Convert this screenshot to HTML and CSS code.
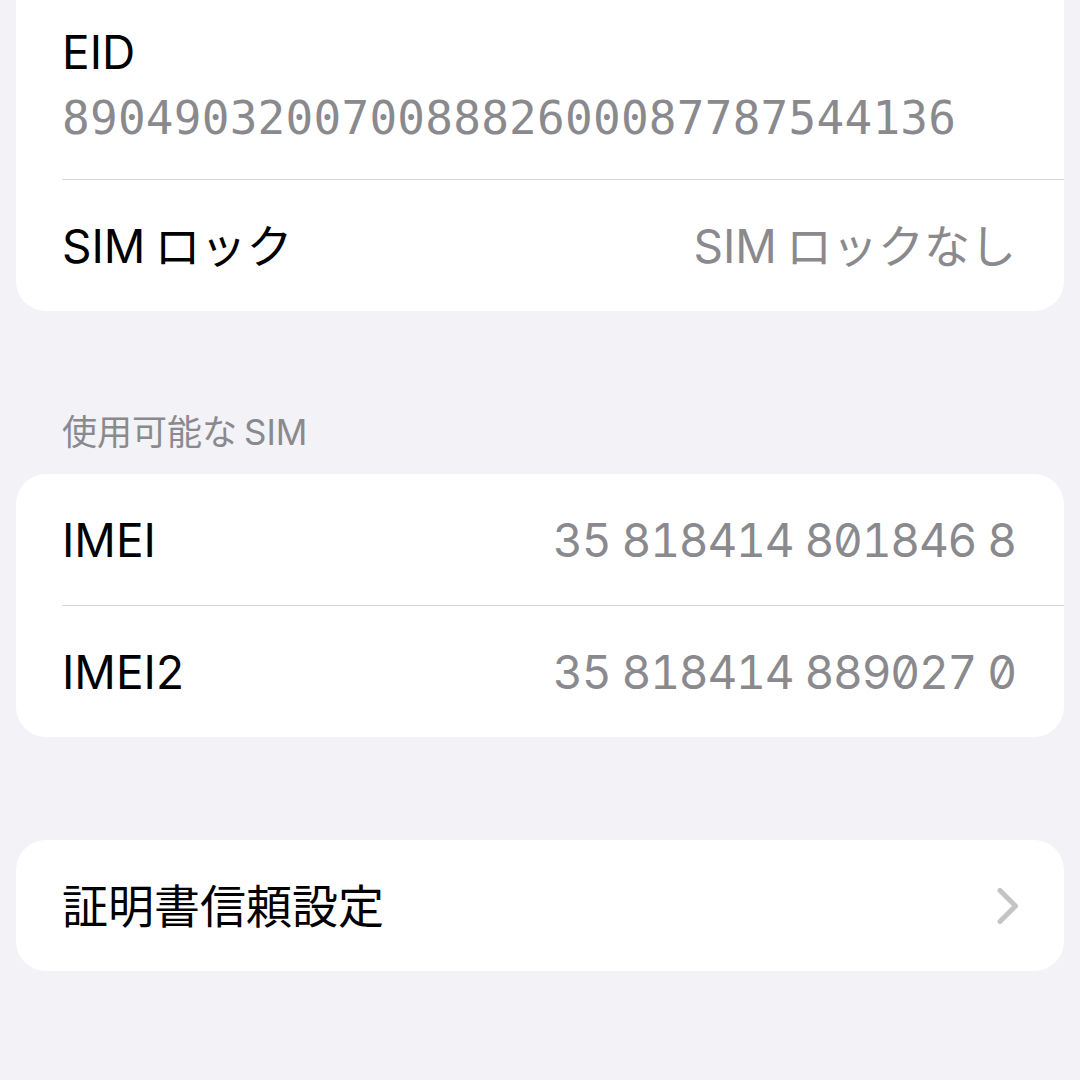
FILE: index.html
```html
<!DOCTYPE html>
<html lang="ja">
<head>
  <meta charset="UTF-8">
  <meta name="viewport" content="width=device-width, initial-scale=1.0">
  <title>情報</title>
  <link rel="stylesheet" href="styles.css">
</head>
<body>
  <div class="group cut">
    <div class="row tall">
      <div class="row-body stacked">
        <div class="label">EID</div>
        <div class="value mono">89049032007008882600087787544136</div>
      </div>
    </div>
    <div class="row">
      <div class="row-body">
        <div class="label"><span class="latin">SIM</span>ロック</div>
        <div class="value"><span class="latin">SIM</span>ロックなし</div>
      </div>
    </div>
  </div>

  <div class="section-title">使用可能な<span class="latin-after">SIM</span></div>

  <div class="group">
    <div class="row">
      <div class="row-body">
        <div class="label">IMEI</div>
        <div class="value digits">35 818414 801846 8</div>
      </div>
    </div>
    <div class="row">
      <div class="row-body">
        <div class="label">IMEI2</div>
        <div class="value digits">35 818414 889027 0</div>
      </div>
    </div>
  </div>

  <div class="group spaced">
    <div class="row link">
      <div class="row-body">
        <div class="label">証明書信頼設定</div>
        <svg class="chevron" width="22" height="38" viewBox="0 0 22 38">
          <path d="M3 3.5 L18.5 19 L3 34.5" fill="none" stroke="#c4c4c7" stroke-width="5" stroke-linecap="round" stroke-linejoin="round"/>
        </svg>
      </div>
    </div>
  </div>
</body>
</html>
```

FILE: styles.css
```css
body {
  margin: 0;
  background: #f2f2f7;
  font-family: 'Inter', 'Noto Sans CJK JP', sans-serif;
  color: #000;
}
.group {
  margin: 0 16px;
  background: #fff;
  border-radius: 30px;
  overflow: hidden;
}
.group.cut {
  border-top-left-radius: 0;
  border-top-right-radius: 0;
}
.group.spaced {
  margin-top: 103px;
}
.row {
  padding-left: 46px;
}
.row-body {
  display: flex;
  align-items: center;
  justify-content: space-between;
  height: 131px;
  padding-right: 48px;
  border-top: 1px solid #d6d6d9;
  font-size: 46px;
  line-height: 66px;
}
.row:first-child .row-body {
  border-top: none;
}
.row.tall .row-body {
  height: auto;
  padding-top: 19px;
  padding-bottom: 28px;
}
.row-body.stacked {
  flex-direction: column;
  align-items: flex-start;
}
.value {
  color: #8a8a8e;
}
.mono {
  font-family: 'DejaVu Sans Mono', monospace;
  font-size: 46px;
  letter-spacing: 0.25px;
}
.digits {
  font-feature-settings: "tnum", "zero";
  letter-spacing: -1.2px;
}
.latin {
  margin-right: 0.2em;
}
.latin-after {
  margin-left: 0.2em;
}
.section-title {
  margin: 99px 0 20px;
  padding-left: 62px;
  font-size: 35px;
  line-height: 44px;
  color: #8a8a8e;
}
.chevron {
  margin-right: -3px;
}
```
